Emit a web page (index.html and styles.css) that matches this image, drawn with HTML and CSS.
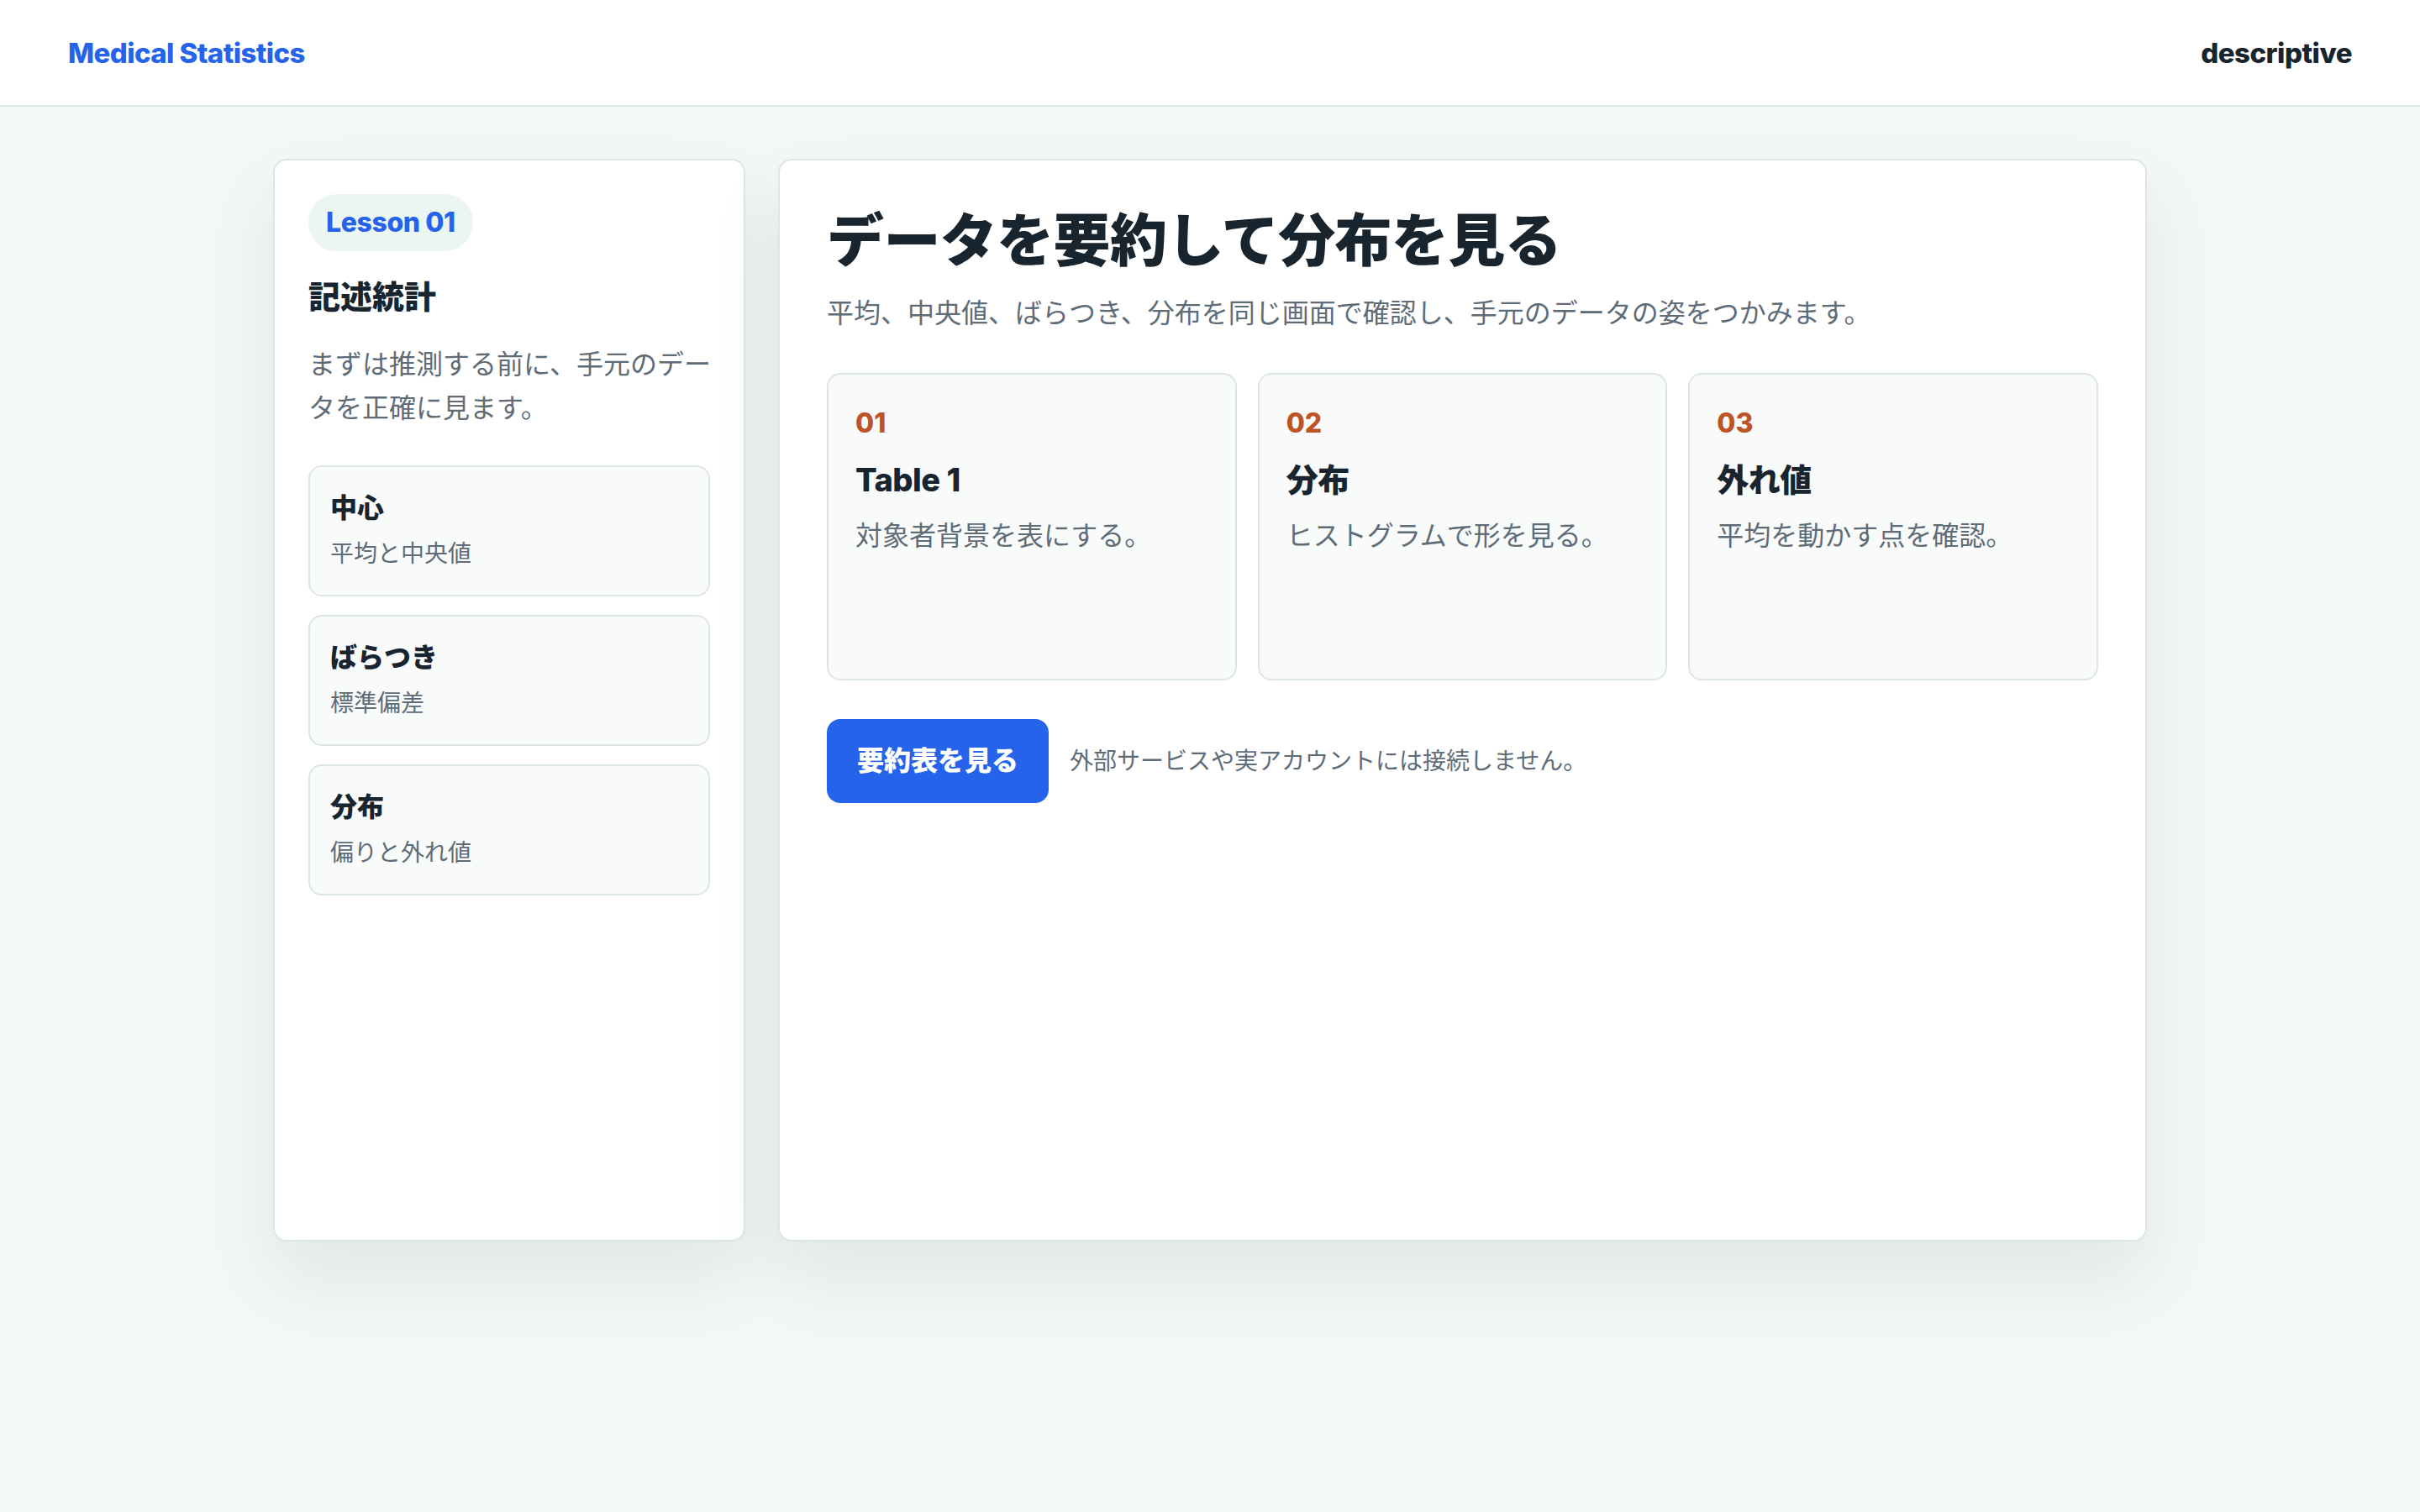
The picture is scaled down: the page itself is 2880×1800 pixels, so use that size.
FILE: index.html
```html
<!DOCTYPE html>
<html lang="ja">
<head>
<meta charset="utf-8">
<title>Medical Statistics</title>
<link rel="stylesheet" href="styles.css">
</head>
<body>
<header class="topbar">
  <div class="brand">Medical Statistics</div>
  <div class="section-name">descriptive</div>
</header>
<main class="layout">
  <aside class="panel side">
    <span class="pill">Lesson 01</span>
    <h2 class="side-title">記述統計</h2>
    <p class="side-desc">まずは推測する前に、手元のデータを正確に見ます。</p>
    <div class="topic-list">
      <div class="topic">
        <div class="topic-title">中心</div>
        <div class="topic-sub">平均と中央値</div>
      </div>
      <div class="topic">
        <div class="topic-title">ばらつき</div>
        <div class="topic-sub">標準偏差</div>
      </div>
      <div class="topic">
        <div class="topic-title">分布</div>
        <div class="topic-sub">偏りと外れ値</div>
      </div>
    </div>
  </aside>
  <section class="panel content">
    <h1 class="title">データを要約して分布を見る</h1>
    <p class="lead">平均、中央値、ばらつき、分布を同じ画面で確認し、手元のデータの姿をつかみます。</p>
    <div class="steps">
      <div class="step">
        <div class="step-num">01</div>
        <div class="step-title">Table 1</div>
        <div class="step-desc">対象者背景を表にする。</div>
      </div>
      <div class="step">
        <div class="step-num">02</div>
        <div class="step-title">分布</div>
        <div class="step-desc">ヒストグラムで形を見る。</div>
      </div>
      <div class="step">
        <div class="step-num">03</div>
        <div class="step-title">外れ値</div>
        <div class="step-desc">平均を動かす点を確認。</div>
      </div>
    </div>
    <div class="actions">
      <button class="btn" type="button">要約表を見る</button>
      <span class="note">外部サービスや実アカウントには接続しません。</span>
    </div>
  </section>
</main>
</body>
</html>
```
FILE: styles.css
```css
* { box-sizing: border-box; }
html, body { margin: 0; padding: 0; }
body {
  background: #f3f7f6;
  color: #18242e;
  font-family: Inter, "Noto Sans CJK JP", "Noto Sans", sans-serif;
  min-height: 1800px;
}
.topbar {
  height: 127px;
  background: #ffffff;
  border-bottom: 2px solid #dce6e7;
  display: flex;
  align-items: center;
  justify-content: space-between;
  padding: 0 81px;
}
.brand {
  color: #2563eb;
  font-size: 33px;
  font-weight: 800;
  letter-spacing: -0.6px;
}
.section-name {
  color: #18242e;
  font-size: 33px;
  font-weight: 800;
  letter-spacing: -0.5px;
}
.layout {
  display: grid;
  grid-template-columns: 562px 1629px;
  gap: 39px;
  justify-content: center;
  padding-top: 62px;
}
.panel {
  background: #ffffff;
  border: 2px solid #dce5e9;
  border-radius: 16px;
  box-shadow: 0 44px 90px rgba(20, 44, 44, 0.075);
  min-height: 1289px;
}
.side { padding: 40px; }
.pill {
  display: inline-block;
  background: #ebf5f2;
  color: #2563eb;
  font-size: 32px;
  font-weight: 800;
  line-height: 36px;
  padding: 16px 21px;
  border-radius: 999px;
  letter-spacing: -0.4px;
}
.side-title {
  margin: 28px 0 0;
  font-size: 38px;
  font-weight: 900;
  line-height: 53px;
}
.side-desc {
  margin: 28px -4px 0 0;
  font-size: 32px;
  line-height: 52px;
  color: #5e6c78;
}
.topic-list {
  margin-top: 42px;
  display: flex;
  flex-direction: column;
  gap: 22px;
}
.topic {
  background: #f9fbfb;
  border: 2px solid #dce5e9;
  border-radius: 16px;
  padding: 24px;
  height: 156px;
}
.topic-title {
  font-size: 32px;
  font-weight: 900;
  line-height: 50px;
}
.topic-sub {
  margin-top: 7px;
  font-size: 28px;
  line-height: 44px;
  color: #5e6c78;
}
.content { padding: 56px; }
.title {
  margin: 0;
  font-size: 68px;
  font-weight: 900;
  line-height: 78px;
  letter-spacing: -0.6px;
}
.lead {
  margin: 22px 0 0;
  font-size: 32px;
  line-height: 51px;
  color: #5e6c78;
}
.steps {
  margin-top: 46px;
  display: grid;
  grid-template-columns: repeat(3, 1fr);
  gap: 25px;
}
.step {
  background: #f9fbfb;
  border: 2px solid #dce5e9;
  border-radius: 16px;
  padding: 32px;
  height: 366px;
}
.step-num {
  color: #bd5427;
  font-size: 32px;
  font-weight: 800;
  line-height: 52px;
}
.step-title {
  margin-top: 16px;
  font-size: 38px;
  font-weight: 800;
  line-height: 50px;
  letter-spacing: -0.5px;
}
.step-desc {
  margin-top: 16px;
  font-size: 32px;
  line-height: 51px;
  color: #5e6c78;
}
.actions {
  margin-top: 46px;
  display: flex;
  align-items: center;
  gap: 25px;
}
.btn {
  background: #2563eb;
  color: #ffffff;
  border: 0;
  border-radius: 16px;
  font-family: Inter, "Noto Sans CJK JP", sans-serif;
  font-size: 32px;
  font-weight: 900;
  line-height: 52px;
  padding: 24px 36px;
}
.note {
  font-size: 28px;
  line-height: 44px;
  color: #5e6c78;
}
```
